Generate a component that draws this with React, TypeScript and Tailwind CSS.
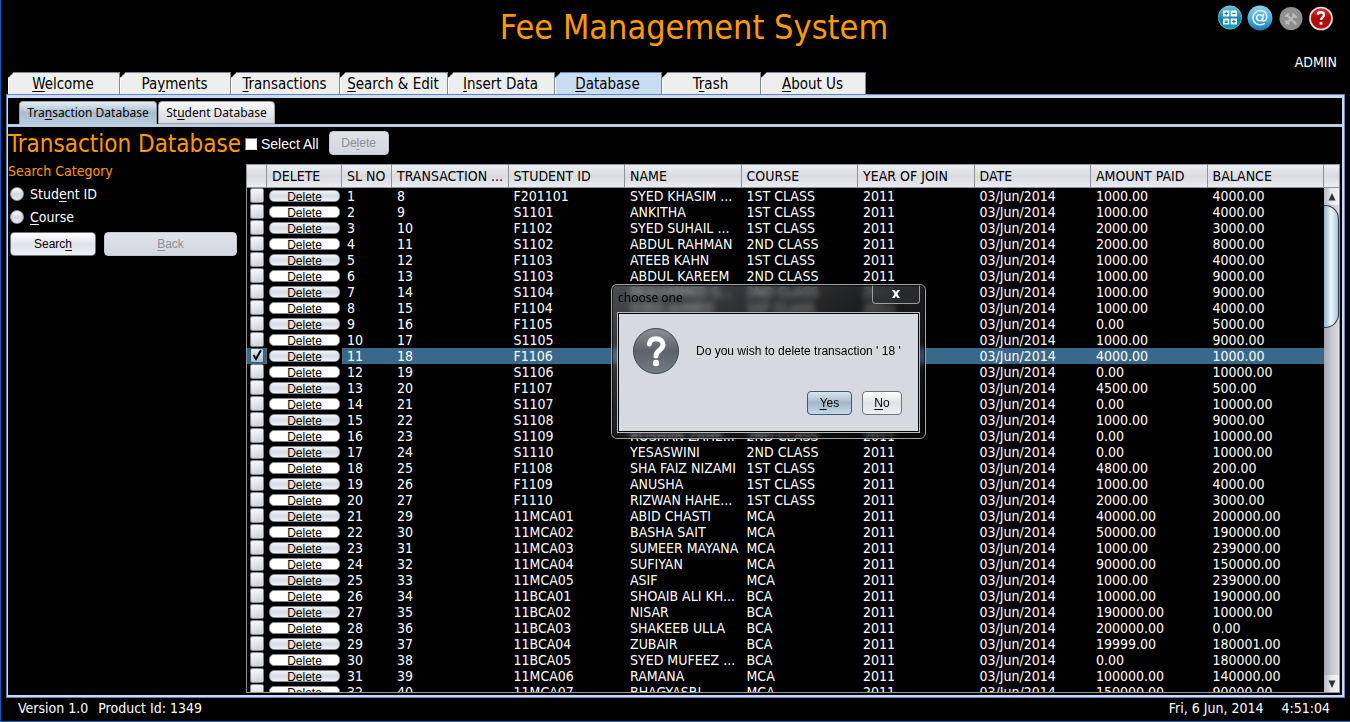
import React, { useState } from "react";

type Row = [string, string, string, string, string, string, string];

// transaction, student id, name, course, year, amount, balance
const rows: Row[] = [
  ["8", "F201101", "SYED KHASIM ...", "1ST CLASS", "2011", "1000.00", "4000.00"],
  ["9", "S1101", "ANKITHA", "1ST CLASS", "2011", "1000.00", "4000.00"],
  ["10", "F1102", "SYED SUHAIL ...", "1ST CLASS", "2011", "2000.00", "3000.00"],
  ["11", "S1102", "ABDUL RAHMAN", "2ND CLASS", "2011", "2000.00", "8000.00"],
  ["12", "F1103", "ATEEB KAHN", "1ST CLASS", "2011", "1000.00", "4000.00"],
  ["13", "S1103", "ABDUL KAREEM", "2ND CLASS", "2011", "1000.00", "9000.00"],
  ["14", "S1104", "MUHAMMED S...", "2ND CLASS", "2011", "1000.00", "9000.00"],
  ["15", "F1104", "SYED AHMED", "1ST CLASS", "2011", "1000.00", "4000.00"],
  ["16", "F1105", "", "", "", "0.00", "5000.00"],
  ["17", "S1105", "", "", "", "1000.00", "9000.00"],
  ["18", "F1106", "", "", "", "4000.00", "1000.00"],
  ["19", "S1106", "", "", "", "0.00", "10000.00"],
  ["20", "F1107", "", "", "", "4500.00", "500.00"],
  ["21", "S1107", "", "", "", "0.00", "10000.00"],
  ["22", "S1108", "", "", "", "1000.00", "9000.00"],
  ["23", "S1109", "ROSHAN ZAHE...", "2ND CLASS", "2011", "0.00", "10000.00"],
  ["24", "S1110", "YESASWINI", "2ND CLASS", "2011", "0.00", "10000.00"],
  ["25", "F1108", "SHA FAIZ NIZAMI", "1ST CLASS", "2011", "4800.00", "200.00"],
  ["26", "F1109", "ANUSHA", "1ST CLASS", "2011", "1000.00", "4000.00"],
  ["27", "F1110", "RIZWAN HAHE...", "1ST CLASS", "2011", "2000.00", "3000.00"],
  ["29", "11MCA01", "ABID CHASTI", "MCA", "2011", "40000.00", "200000.00"],
  ["30", "11MCA02", "BASHA SAIT", "MCA", "2011", "50000.00", "190000.00"],
  ["31", "11MCA03", "SUMEER MAYANA", "MCA", "2011", "1000.00", "239000.00"],
  ["32", "11MCA04", "SUFIYAN", "MCA", "2011", "90000.00", "150000.00"],
  ["33", "11MCA05", "ASIF", "MCA", "2011", "1000.00", "239000.00"],
  ["34", "11BCA01", "SHOAIB ALI KH...", "BCA", "2011", "10000.00", "190000.00"],
  ["35", "11BCA02", "NISAR", "BCA", "2011", "190000.00", "10000.00"],
  ["36", "11BCA03", "SHAKEEB ULLA", "BCA", "2011", "200000.00", "0.00"],
  ["37", "11BCA04", "ZUBAIR", "BCA", "2011", "19999.00", "180001.00"],
  ["38", "11BCA05", "SYED MUFEEZ ...", "BCA", "2011", "0.00", "180000.00"],
  ["39", "11MCA06", "RAMANA", "MCA", "2011", "100000.00", "140000.00"],
  ["40", "11MCA07", "BHAGYASRI", "MCA", "2011", "150000.00", "90000.00"],
];

const headers = [
  "",
  "DELETE",
  "SL NO",
  "TRANSACTION ...",
  "STUDENT ID",
  "NAME",
  "COURSE",
  "YEAR OF JOIN",
  "DATE",
  "AMOUNT PAID",
  "BALANCE",
];

/** Label with one underlined mnemonic letter. */
function Mnemonic({ text, at }: { text: string; at: number }) {
  return (
    <>
      {text.slice(0, at)}
      <span className="underline decoration-1 underline-offset-2">{text[at]}</span>
      {text.slice(at + 1)}
    </>
  );
}

const tabs = [
  { text: "Welcome", at: 0, width: "w-28" },
  { text: "Payments", at: 2, width: "w-[111px]" },
  { text: "Transactions", at: 0, width: "w-[109px]" },
  { text: "Search & Edit", at: 0, width: "w-[108px]" },
  { text: "Insert Data", at: 0, width: "w-[107px]" },
  { text: "Database", at: 0, width: "w-[107px]" },
  { text: "Trash", at: 1, width: "w-[99px]" },
  { text: "About Us", at: 0, width: "w-[105px]" },
];

function HeaderIcons() {
  return (
    <div className="flex gap-1 pr-1">
      <button type="button" aria-label="Calculator" className="size-[26px]">
        <svg viewBox="0 0 26 26" className="size-full">
          <defs>
            <linearGradient id="calc" x1="0" y1="0" x2="0" y2="1">
              <stop offset="0" stopColor="#6cc3d6" />
              <stop offset="0.45" stopColor="#1f96b4" />
              <stop offset="0.6" stopColor="#0682a4" />
              <stop offset="1" stopColor="#19a5c8" />
            </linearGradient>
          </defs>
          <circle cx="13" cy="12.5" r="11.7" fill="url(#calc)" stroke="#9bd3e2" strokeWidth="0.6" />
          <path d="M6 5.5h6.300v6H6zM13.700 5.500h6.300v6h-6.300zM6 13.500h6.300v6H6zM13.700 13.500h6.300v6h-6.300z" fill="#f4fbfd" />
          <path
            d="M7.500 8.500h3.400M9.200 6.800v3.400M15.200 8.500h3.400M7.600 16h3.200M7.600 17.400h3.200M15.200 16.500h3.400M16.900 14.800v3.400"
            stroke="#1389ab"
            strokeWidth="1.2"
          />
        </svg>
      </button>
      <button type="button" aria-label="E-mail" className="size-[26px]">
        <svg viewBox="0 0 26 26" className="size-full">
          <defs>
            <linearGradient id="mail" x1="0" y1="0" x2="0" y2="1">
              <stop offset="0" stopColor="#8fd0f0" />
              <stop offset="0.5" stopColor="#4fb0e2" />
              <stop offset="1" stopColor="#1577b8" />
            </linearGradient>
          </defs>
          <circle cx="13" cy="13" r="12.5" fill="url(#mail)" />
          <circle cx="12.700" cy="12.800" r="3" fill="none" stroke="#e8f5fc" strokeWidth="1.6" />
          <path
            d="M16.4 9.200l-.8 5c-.2 1.600.5 2 1.400 1.800 1.800-.5 3-2.500 2.700-4.900C19.200 7.800 16.500 5.600 13.300 5.600 9.200 5.600 6 8.800 6 12.900c0 4.100 3 6.900 6.900 6.900 1.800 0 3.200-.4 4.500-1.200"
            fill="none"
            stroke="#e8f5fc"
            strokeWidth="1.500"
            strokeLinecap="round"
          />
        </svg>
      </button>
      <button type="button" aria-label="Settings" className="size-[26px]">
        <svg viewBox="0 0 26 26" className="size-full">
          <circle cx="14" cy="13.500" r="11.500" fill="#8f8f8f" />
          <path d="M9.500 18.500L17.500 10.500M10.500 10.500l8 8" stroke="#bdbdbd" strokeWidth="2.200" strokeLinecap="round" />
          <path
            d="M8.300 11.800l3.400-3.400M16.300 8.200a2.800 2.800 0 0 0 3.600 3.600M8.200 16.500a2.600 2.600 0 0 1 3.300 3.300"
            fill="none"
            stroke="#bdbdbd"
            strokeWidth="1.900"
          />
        </svg>
      </button>
      <button type="button" aria-label="Help" className="size-[26px]">
        <svg viewBox="0 0 26 26" className="size-full">
          <defs>
            <linearGradient id="help" x1="0" y1="0" x2="0" y2="1">
              <stop offset="0" stopColor="#cc3a3a" />
              <stop offset="0.5" stopColor="#b10505" />
              <stop offset="1" stopColor="#c40a0a" />
            </linearGradient>
          </defs>
          <circle cx="14" cy="13.500" r="11" fill="url(#help)" stroke="#e0e0e0" strokeWidth="1.700" />
          <path
            d="M10.700 9.800c.3-1.700 1.500-2.500 3.200-2.500 1.900 0 3.100 1 3.100 2.600 0 2.500-3 2.500-3 5.200"
            fill="none"
            stroke="#fff"
            strokeWidth="2.400"
          />
          <path d="M12.700 16.900h2.700v2.700h-2.700z" fill="#fff" />
        </svg>
      </button>
    </div>
  );
}

const nimbus =
  "rounded border border-[#6f747e] bg-linear-to-b from-white via-[#dfe2e8] to-[#eef0f4] text-black text-[12px] leading-4 font-['Liberation_Sans',sans-serif]";
const nimbusOff =
  "rounded border border-[#c3c7ce] bg-linear-to-b from-[#dfe3e8] to-[#d3d7df] text-[#8e8f93] text-[12px] leading-4 font-['Liberation_Sans',sans-serif]";

function SearchPanel() {
  return (
    <form className="flex w-[238px] shrink-0 flex-col" onSubmit={(e) => e.preventDefault()}>
      <fieldset>
        <legend className="h-[18px] text-[14px] leading-[14px] text-[#ff9900]">Search Category</legend>
        {[
          { text: "Student ID", at: 4 },
          { text: "Course", at: 0 },
        ].map((o) => (
          <label key={o.text} className="flex h-[23px] items-center gap-1.5 pl-0.5 text-white">
            <input
              type="radio"
              name="category"
              className="size-3.5 appearance-none rounded-full border border-[#8d9199] bg-linear-to-b from-white via-[#d5d8df] to-[#e6e8ee] checked:bg-[#7f9db9]"
            />
            <span>
              <Mnemonic text={o.text} at={o.at} />
            </span>
          </label>
        ))}
      </fieldset>
      <div className="mt-1 flex gap-2 pr-[9px] pl-0.5">
        <button type="submit" className={`${nimbus} h-6 w-[86px]`}>
          <Mnemonic text="Search" at={5} />
        </button>
        <button type="button" disabled className={`${nimbusOff} h-6 flex-1`}>
          <Mnemonic text="Back" at={0} />
        </button>
      </div>
    </form>
  );
}

function TransactionTable() {
  const [selected, setSelected] = useState<number[]>([10]);
  const toggle = (i: number) =>
    setSelected((s) => (s.includes(i) ? s.filter((n) => n !== i) : [...s, i]));

  return (
    <div className="flex min-w-0 flex-1 overflow-hidden border border-[#8f949d]">
      <div className="min-w-0 flex-1 overflow-hidden">
        <table className="w-full table-fixed border-separate border-spacing-0 text-left">
          <colgroup>
            <col className="w-5" />
            <col className="w-[75px]" />
            <col className="w-[50px]" />
            {headers.slice(3).map((h) => (
              <col key={h} />
            ))}
          </colgroup>
          <thead>
            <tr className="h-[23px] bg-linear-to-b from-[#eceef3] via-[#d9dbe1] to-[#eceef4] text-black">
              {headers.map((h, i) => (
                <th
                  key={i}
                  scope="col"
                  className="overflow-hidden border-r border-b border-[#8d919b] p-0 pl-[5px] font-normal whitespace-nowrap"
                >
                  {h}
                </th>
              ))}
            </tr>
          </thead>
          <tbody>
            {rows.map((r, i) => {
              const on = selected.includes(i);
              const tone = on ? "bg-[#39698a]" : "";
              const cell = `${tone} overflow-hidden p-0 pl-[5px] whitespace-nowrap`;
              return (
                <tr key={i} className="h-4 leading-4 text-white">
                  <td className={`${tone} p-0 pl-[3px]`}>
                    <label className="relative block h-4">
                      <input
                        type="checkbox"
                        aria-label={`Select row ${i + 1}`}
                        checked={on}
                        onChange={() => toggle(i)}
                        className="block h-[15px] w-3.5 appearance-none rounded-xs border border-[#7c808a] bg-linear-to-b from-[#f6f7f9] to-[#d3d6dd] checked:border-[#3c5a70] checked:from-[#e4edf3] checked:to-[#a9bfd0]"
                      />
                      {on && (
                        <svg viewBox="0 0 14 14" className="absolute top-0 left-0 size-3.5">
                          <path d="M3.500 7l2.500 4L11 2" fill="none" stroke="#000" strokeWidth="2" />
                        </svg>
                      )}
                    </label>
                  </td>
                  <td className="p-0 px-0.5">
                    <button
                      type="button"
                      className={`block h-3 w-full rounded-[5px] border border-[#858a94] text-center font-['Liberation_Sans',sans-serif] text-[12px] leading-3 text-black ${
                        i % 2 ? "bg-white" : "bg-linear-to-b from-[#f4f5f8] via-[#d6d9e2] to-[#f2f3f8]"
                      }`}
                    >
                      Delete
                    </button>
                  </td>
                  <td className={cell}>{i + 1}</td>
                  <td className={cell}>{r[0]}</td>
                  <td className={cell}>{r[1]}</td>
                  <td className={cell}>{r[2]}</td>
                  <td className={cell}>{r[3]}</td>
                  <td className={cell}>{r[4]}</td>
                  <td className={cell}>03/Jun/2014</td>
                  <td className={cell}>{r[5]}</td>
                  <td className={cell}>{r[6]}</td>
                </tr>
              );
            })}
          </tbody>
        </table>
      </div>
      <div className="flex w-[15px] shrink-0 flex-col">
        <div className="h-[23px] shrink-0 border-b border-[#8d919b] bg-linear-to-b from-[#eceef3] via-[#d9dbe1] to-[#eceef4]" />
        <button
          type="button"
          aria-label="Scroll up"
          className="flex h-[17px] shrink-0 items-center justify-center bg-linear-to-r from-[#b9bcc4] via-[#e8e9ed] to-[#f2f3f6]"
        >
          <svg viewBox="0 0 8 8" className="size-2">
            <path d="M4 0l3.500 7.500h-7z" fill="#333" />
          </svg>
        </button>
        <div className="flex-1 bg-linear-to-r from-[#a5a7ae] via-[#c6c8ce] to-[#dcdde2]">
          <div className="h-[123px] rounded-r-[14px] border border-l-0 border-[#26415a] bg-linear-to-r from-[#8fb0c8] via-[#f0f6fa] to-[#a9c4d8]" />
        </div>
        <button
          type="button"
          aria-label="Scroll down"
          className="flex h-[17px] shrink-0 items-center justify-center bg-linear-to-r from-[#b9bcc4] via-[#e8e9ed] to-[#f2f3f6]"
        >
          <svg viewBox="0 0 8 8" className="size-2">
            <path d="M4 8L.5.5h7z" fill="#333" />
          </svg>
        </button>
      </div>
    </div>
  );
}

function ConfirmDialog() {
  return (
    <div
      role="dialog"
      aria-label="choose one"
      className="absolute top-[284px] left-[610px] w-[315px] rounded-md border border-[#a3a7ab] bg-linear-to-br from-[#7c7f84]/60 via-[#3a3b3e]/45 to-[#111111]/40 p-[5px] pt-0 outline outline-1 -outline-offset-2 outline-black/60 backdrop-blur-[3px]"
    >
      <div className="flex h-[27px] items-start justify-between font-['Noto_Sans',sans-serif] text-[12px] text-black">
        <span className="pt-[3px] pl-px leading-5">choose one</span>
        <button
          type="button"
          aria-label="Close"
          className="flex h-[19px] w-12 items-center justify-center rounded-b border border-t-0 border-[#9b9ea2] bg-[#2e3033]/70"
        >
          <svg viewBox="0 0 10 8" className="h-2 w-2.5">
            <path d="M1 0h2.500L5 2 6.500 0H9L6.400 4 9 8H6.500L5 6 3.500 8H1l2.600-4z" fill="#fff" />
          </svg>
        </button>
      </div>
      <div className="flex flex-col border border-[#b9bcc0] bg-[#d6d9df] px-[15px] pt-[15px] pb-[17px] font-['Liberation_Sans',sans-serif] text-[12px] text-black outline outline-1 -outline-offset-2 outline-black">
        <div className="flex items-center gap-[17px] whitespace-nowrap">
          <svg viewBox="0 0 46 46" className="size-[46px] shrink-0">
            <defs>
              <linearGradient id="ask" x1="0" y1="0" x2="0" y2="1">
                <stop offset="0" stopColor="#8b9197" />
                <stop offset="0.5" stopColor="#5b6269" />
                <stop offset="1" stopColor="#757c83" />
              </linearGradient>
            </defs>
            <circle cx="23" cy="23" r="22.500" fill="url(#ask)" stroke="#3e454b" />
            <path
              d="M16.300 16c.6-3.400 3.200-5.200 6.700-5.200 4.100 0 7 2.300 7 6 0 5.200-7 5.200-7 11.200"
              fill="none"
              stroke="#fff"
              strokeWidth="5"
              strokeLinecap="round"
            />
            <circle cx="23" cy="35" r="3.200" fill="#fff" />
          </svg>
          <p>Do you wish to delete transaction ' 18 '</p>
        </div>
        <div className="mt-[17px] flex justify-end gap-2.5 pr-0.5">
          <button
            type="button"
            className="h-6 w-[45px] rounded border border-[#3d5a74] bg-linear-to-b from-[#dde6ed] via-[#a3b8c8] to-[#c5d9e8]"
          >
            <Mnemonic text="Yes" at={0} />
          </button>
          <button type="button" className={`${nimbus} h-6 w-10`}>
            <Mnemonic text="No" at={0} />
          </button>
        </div>
      </div>
    </div>
  );
}

export default function App() {
  return (
    <div className="relative flex h-screen flex-col overflow-hidden border-b border-l border-[#0a5cc0] bg-black font-['DejaVu_Sans_Condensed','Noto_Sans',sans-serif] text-[14px] leading-4 text-white">
      <header className="grid h-[72px] shrink-0 grid-cols-[1fr_auto_1fr] pr-[13px] pl-[50px]">
        <span />
        <h1 className="pt-[7px] text-[34px] leading-10 text-[#ff9900]">Fee Management System</h1>
        <div className="flex flex-col items-end justify-between pt-[5px] pb-0.5">
          <HeaderIcons />
          <span>ADMIN</span>
        </div>
      </header>

      <nav className="flex shrink-0 pl-[7px]">
        {tabs.map((t) => {
          const on = t.text === "Database";
          return (
            <button
              key={t.text}
              type="button"
              className={`${t.width} h-[22px] border-t border-r border-l border-l-white pr-0.5 text-[15px] text-black [clip-path:polygon(6px_0,100%_0,100%_100%,0_100%,0_6px)] ${
                on ? "border-[#6382bf] bg-[#c8ddf2]" : "border-[#7a8a99] bg-[#eeeeee]"
              }`}
            >
              <Mnemonic text={t.text} at={t.at} />
            </button>
          );
        })}
      </nav>

      <main className="mr-[5px] ml-[5px] flex min-h-0 flex-1 flex-col border border-[#6382bf]">
        <div className="flex min-h-0 flex-1 flex-col border-t-3 border-r-2 border-b-2 border-l border-[#c8ddf2]">
          <div className="flex h-[29px] shrink-0 items-end gap-px border-b-3 border-[#b8cfe5] pl-[11px] font-['Noto_Sans',sans-serif] text-[12px] text-black">
            <button
              type="button"
              className="h-[23px] w-[138px] rounded-t border border-b-0 border-[#8ba0b3] bg-linear-to-b from-[#e6edf2] via-[#a9bdcd] to-[#b5cadb]"
            >
              <Mnemonic text="Transaction Database" at={3} />
            </button>
            <button
              type="button"
              className="h-[23px] w-[117px] rounded-t border border-[#9da1a9] bg-linear-to-b from-[#f7f8fa] to-[#d6d9df]"
            >
              <Mnemonic text="Student Database" at={2} />
            </button>
          </div>

          <div className="flex h-[37px] shrink-0 items-center pb-1">
            <h2 className="w-[237px] text-[24px] leading-8 whitespace-nowrap text-[#ff9900]">Transaction Database</h2>
            <label className="flex items-center gap-1 font-['Liberation_Sans',sans-serif] text-[14px]">
              <input
                type="checkbox"
                className="size-3 appearance-none border border-t-[#777] border-r-[#ddd] border-b-[#ddd] border-l-[#777] bg-white checked:bg-[#39698a]"
              />
              Select All
            </label>
            <button type="button" disabled className={`${nimbusOff} mb-0.5 ml-2.5 h-6 w-[60px]`}>
              <Mnemonic text="Delete" at={2} />
            </button>
          </div>

          <div className="flex min-h-0 flex-1 pr-0.5 pb-0.5">
            <SearchPanel />
            <TransactionTable />
          </div>
        </div>
      </main>

      <footer className="flex h-[23px] shrink-0 items-start justify-between pt-0.5 pr-5 pl-[17px]">
        <p className="flex gap-2.5">
          <span>Version 1.0</span>
          <span>Product Id: 1349</span>
        </p>
        <p className="flex gap-[18px]">
          <span>Fri, 6 Jun, 2014</span>
          <span>4:51:04</span>
        </p>
      </footer>

      <ConfirmDialog />
    </div>
  );
}
